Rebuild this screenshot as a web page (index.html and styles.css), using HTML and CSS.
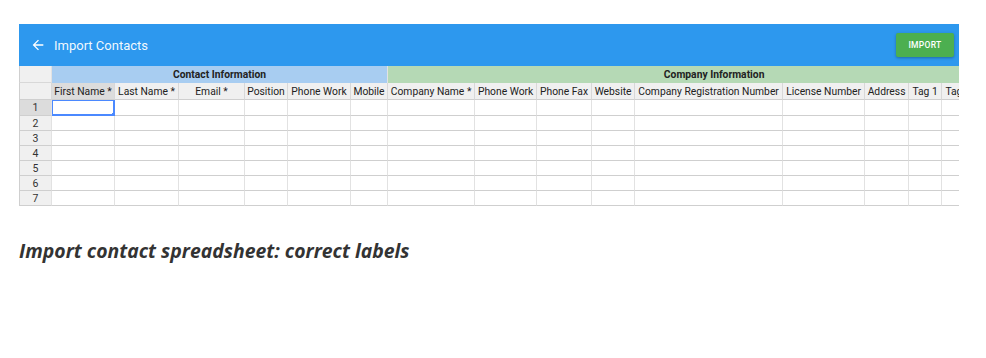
FILE: index.html
```html
<!DOCTYPE html>
<html>
<head>
<meta charset="utf-8">
<link rel="stylesheet" href="styles.css">
</head>
<body>
<div class="page">
  <div class="panel">
    <div class="appbar">
      <div class="appbar-left">
        <svg class="back" width="16" height="16" viewBox="0 0 24 24"><path d="M20 11H7.83l5.59-5.59L12 4l-8 8 8 8 1.41-1.41L7.83 13H20v-2z" fill="#fff"/></svg>
        <span class="title">Import Contacts</span>
      </div>
      <button class="import-btn">IMPORT</button>
    </div>
    <div class="grid-wrap">
      <table class="grid">
        <colgroup>
          <col style="width:33px"><col style="width:63px"><col style="width:64px"><col style="width:66px"><col style="width:43px"><col style="width:63px"><col style="width:37px"><col style="width:87px"><col style="width:62px"><col style="width:55px"><col style="width:43px"><col style="width:148px"><col style="width:82px"><col style="width:44px"><col style="width:33px"><col style="width:33px"><col style="width:33px"><col style="width:33px">
        </colgroup>
        <thead>
          <tr class="group-row">
            <th class="corner"></th>
            <th class="grp contact" colspan="6">Contact Information</th>
            <th class="grp company" colspan="11">Company Information</th>
          </tr>
          <tr class="col-row">
            <th class="corner"></th>
            <th class="hl">First Name *</th><th>Last Name *</th><th>Email *</th><th>Position</th><th>Phone Work</th><th>Mobile</th><th>Company Name *</th><th>Phone Work</th><th>Phone Fax</th><th>Website</th><th>Company Registration Number</th><th>License Number</th><th>Address</th><th>Tag 1</th><th>Tag 2</th><th>Tag 3</th><th>Tag 4</th>
          </tr>
        </thead>
        <tbody>
          <tr><th class="rh hl">1</th><td class="sel"><span class="handle"></span></td><td></td><td></td><td></td><td></td><td></td><td></td><td></td><td></td><td></td><td></td><td></td><td></td><td></td><td></td><td></td><td></td></tr>
          <tr><th class="rh">2</th><td></td><td></td><td></td><td></td><td></td><td></td><td></td><td></td><td></td><td></td><td></td><td></td><td></td><td></td><td></td><td></td><td></td></tr>
          <tr><th class="rh">3</th><td></td><td></td><td></td><td></td><td></td><td></td><td></td><td></td><td></td><td></td><td></td><td></td><td></td><td></td><td></td><td></td><td></td></tr>
          <tr><th class="rh">4</th><td></td><td></td><td></td><td></td><td></td><td></td><td></td><td></td><td></td><td></td><td></td><td></td><td></td><td></td><td></td><td></td><td></td></tr>
          <tr><th class="rh">5</th><td></td><td></td><td></td><td></td><td></td><td></td><td></td><td></td><td></td><td></td><td></td><td></td><td></td><td></td><td></td><td></td><td></td></tr>
          <tr><th class="rh">6</th><td></td><td></td><td></td><td></td><td></td><td></td><td></td><td></td><td></td><td></td><td></td><td></td><td></td><td></td><td></td><td></td><td></td></tr>
          <tr><th class="rh">7</th><td></td><td></td><td></td><td></td><td></td><td></td><td></td><td></td><td></td><td></td><td></td><td></td><td></td><td></td><td></td><td></td><td></td></tr>
        </tbody>
      </table>
    </div>
  </div>
  <p class="caption">Import contact spreadsheet: correct labels</p>
</div>
</body>
</html>
```

FILE: styles.css
```css
html, body {
  margin: 0;
  padding: 0;
  background: #fff;
}
.page {
  padding: 24px 0 0 19px;
}
.panel {
  width: 940px;
  overflow: hidden;
}
.appbar {
  height: 42px;
  background: #2d98ee;
  display: flex;
  align-items: center;
  justify-content: space-between;
  padding: 0 5px 0 11px;
  box-sizing: border-box;
}
.appbar-left {
  display: flex;
  align-items: center;
}
.back {
  display: block;
}
.title {
  font-family: Roboto, "Liberation Sans", sans-serif;
  font-size: 13px;
  color: rgba(255,255,255,0.95);
  margin-left: 8px;
}
.import-btn {
  width: 58px;
  height: 24px;
  background: #4caf50;
  border: none;
  border-radius: 2px;
  color: #fff;
  font-family: Roboto, "Liberation Sans", sans-serif;
  font-size: 8.5px;
  font-weight: 500;
  letter-spacing: 0.3px;
  box-shadow: 0 1px 3px rgba(0,0,0,0.3);
  padding: 0;
}
.grid-wrap {
  width: 940px;
  overflow: hidden;
}
.grid {
  border-collapse: separate;
  border-spacing: 0;
  table-layout: fixed;
  width: 1021px;
  font-family: Roboto, "Liberation Sans", sans-serif;
  font-size: 10.3px;
  color: #222;
}
.grid th, .grid td {
  padding: 0;
  box-sizing: border-box;
  border-right: 1px solid #e2e2e2;
  border-bottom: 1px solid #cfcfcf;
  white-space: nowrap;
  overflow: hidden;
  position: relative;
}
.grid tr > :first-child {
  border-left: 1px solid #cfcfcf;
}
.group-row th {
  height: 17px;
  font-weight: 700;
  text-align: center;
  border-bottom: none;
}
.col-row th {
  height: 17px;
  font-weight: 400;
  background: #f0f0f0;
  text-align: center;
  border-right: 1px solid #d8d8d8;
}
.corner {
  background: #f0f0f0;
}
.group-row .corner {
  border-bottom: 1px solid #d8d8d8;
}
.grp.contact {
  background: #a8cdf1;
}
.grp.company {
  background: #b5d9b5;
}
.grid td {
  height: 15px;
  background: #fff;
}
.grid tbody tr:first-child > * {
  height: 16px;
}
.rh {
  height: 15px;
  background: #f0f0f0;
  font-weight: 400;
  text-align: center;
  color: #333;
  font-size: 10.5px;
}
.grid .hl {
  background: #dcdcdc;
}
.grid td.sel {
  overflow: visible;
  box-shadow: inset 0 0 0 1px #4b89ff;
  border-bottom: 1px solid #4b89ff;
  border-right: 1px solid #4b89ff;
}
.handle {
  position: absolute;
  right: -3px;
  bottom: -3px;
  width: 5px;
  height: 5px;
  background: #4b89ff;
}
.caption {
  margin: 33px 0 0 0;
  font-family: "Open Sans", "DejaVu Sans", sans-serif;
  font-weight: 700;
  font-style: italic;
  font-size: 19.4px;
  line-height: 24px;
  color: #333;
}
```
